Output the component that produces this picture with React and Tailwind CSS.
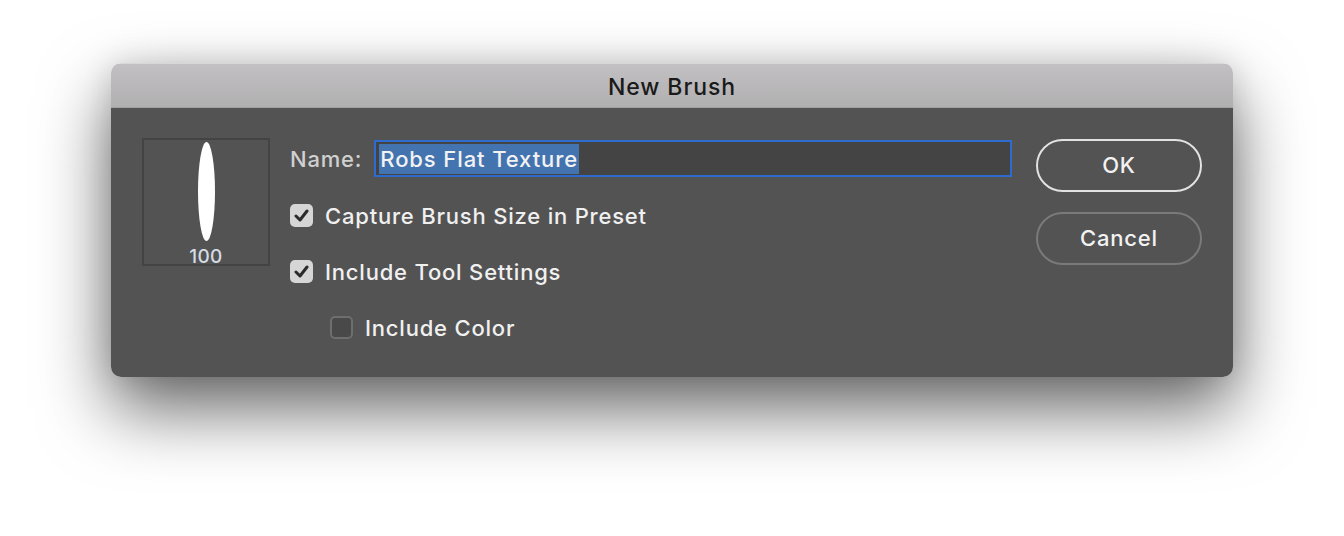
import React, { useState } from 'react';

const font = { fontFamily: 'Inter, "Open Sans", "Liberation Sans", sans-serif' };

const Checkbox = ({ checked, onChange, label, className = '' }) => (
  <label className={`flex items-center gap-[12px] cursor-pointer ${className}`}>
    <button
      type="button"
      onClick={onChange}
      className={`w-[23px] h-[23px] rounded-[5px] flex items-center justify-center ${
        checked ? 'bg-[#d6d6d6]' : 'bg-[#494949] border-2 border-[#6e6e6e]'
      }`}
    >
      {checked && (
        <svg width="15" height="13" viewBox="0 0 15 13">
          <path d="M2 7 L6 11 L13 2" fill="none" stroke="#2b2b2b" strokeWidth="3" strokeLinecap="round" strokeLinejoin="round" />
        </svg>
      )}
    </button>
    <span className="text-[22px] font-medium text-[#f0f0f0] leading-none tracking-[0.8px]">{label}</span>
  </label>
);

export default function App() {
  const [name] = useState('Robs Flat Texture');
  const [captureSize, setCaptureSize] = useState(true);
  const [toolSettings, setToolSettings] = useState(true);
  const [includeColor, setIncludeColor] = useState(false);

  return (
    <div className="w-[1344px] h-[536px] bg-white overflow-hidden pt-[63px] pl-[111px]" style={font}>
      <div className="w-[1122px] h-[314px] rounded-[10px] overflow-hidden shadow-[0_32px_70px_rgba(0,0,0,0.6),0_0_30px_rgba(0,0,0,0.12)] flex flex-col">
        {/* Title bar */}
        <div className="h-[45px] shrink-0 bg-gradient-to-b from-[#c2c0c2] to-[#b1b0b1] border-t border-[#d8d6d8] border-b border-b-[#a0a0a0] flex items-center justify-center pt-[4px]">
          <span className="text-[23px] font-medium text-[#1a1a1a] tracking-[0.9px]">New Brush</span>
        </div>

        {/* Body */}
        <div className="flex-1 bg-[#535353] flex pl-[31px] pt-[30px] pr-[31px]">
          {/* Brush preview */}
          <div className="w-[128px] h-[128px] border-2 border-[#434343] flex flex-col items-center pt-[2px] overflow-visible">
            <div className="w-[17px] h-[99px] shrink-0 bg-white rounded-[50%]" />
            <span className="text-[19px] font-medium text-[#d4dce6] leading-none mt-[6px] shrink-0 tracking-[0.3px]">100</span>
          </div>

          {/* Fields */}
          <div className="flex-1 pl-[20px]">
            <div className="flex items-center h-[37px] mt-[2px]">
              <span className="text-[22px] font-medium text-[#d0d0d0] mr-[12px] tracking-[0.8px] pt-[1px]">Name:</span>
              <div className="w-[638px] h-[37px] bg-[#444444] border-2 border-[#2d6bd1] flex items-center px-[3px]">
                <span className="bg-[#4474b0] text-[22px] font-medium text-[#f2f2f2] leading-[29px] px-[1px] tracking-[0.9px] pt-[1px]">{name}</span>
              </div>
            </div>

            <div className="flex flex-col gap-[33px] mt-[27px]">
              <Checkbox checked={captureSize} onChange={() => setCaptureSize(!captureSize)} label="Capture Brush Size in Preset" />
              <Checkbox checked={toolSettings} onChange={() => setToolSettings(!toolSettings)} label="Include Tool Settings" />
              <Checkbox checked={includeColor} onChange={() => setIncludeColor(!includeColor)} label="Include Color" className="ml-[40px]" />
            </div>
          </div>

          {/* Buttons */}
          <div className="flex flex-col gap-[20px] pt-[1px]">
            <button className="w-[166px] h-[53px] rounded-full border-2 border-[#e2e2e2] text-[22px] font-medium text-[#f2f2f2] tracking-[0.8px]">OK</button>
            <button className="w-[166px] h-[53px] rounded-full border-2 border-[#7a7a7a] text-[22px] font-medium text-[#f2f2f2] tracking-[0.8px]">Cancel</button>
          </div>
        </div>
      </div>
    </div>
  );
}
